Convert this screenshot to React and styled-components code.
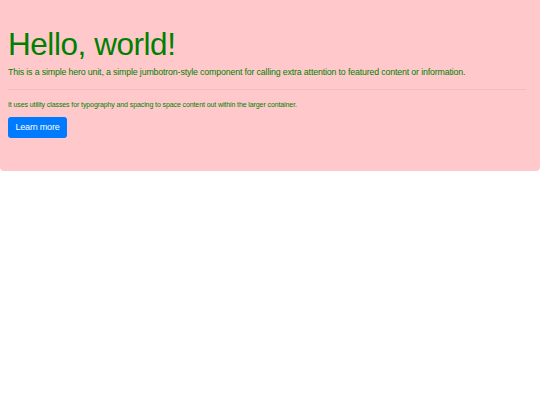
import React from "react";
import styled, { createGlobalStyle } from "styled-components";

const Global = createGlobalStyle`
  html, body { margin: 0; padding: 0; background: #fff; }
  body { font-family: "Liberation Sans", Arial, sans-serif; }
`;

const Jumbotron = styled.section`
  display: flex;
  flex-direction: column;
  align-items: flex-start;
  background: #ffc9cb;
  border-radius: 0 0 4px 4px;
  padding: 25.5px 14px 33px 8px;
  color: #008000;
`;

const Heading = styled.h1`
  margin: 0 0 3px;
  font-size: 31.5px;
  font-weight: 400;
  line-height: 1.2;
  letter-spacing: -0.45px;
`;

const Lead = styled.p`
  margin: 0;
  font-size: 8.8px;
  line-height: 1.5;
  letter-spacing: -0.15px;
`;

const Rule = styled.hr`
  align-self: stretch;
  margin: 10px 0 9.5px;
  border: 0;
  border-top: 1px solid rgba(0, 0, 0, 0.06);
`;

const Small = styled.p`
  margin: 0 0 7px;
  font-size: 7px;
  line-height: 1.5;
  letter-spacing: -0.1px;
`;

const Button = styled.a`
  display: block;
  background: #007bff;
  color: #fff;
  font-size: 9px;
  letter-spacing: -0.2px;
  line-height: 20.5px;
  padding: 0 7.5px;
  border-radius: 3px;
  text-decoration: none;
`;

export default function App() {
  return (
    <>
      <Global />
      <Jumbotron>
        <Heading>Hello, world!</Heading>
        <Lead>
          This is a simple hero unit, a simple jumbotron-style component for calling extra attention to featured content or information.
        </Lead>
        <Rule />
        <Small>It uses utility classes for typography and spacing to space content out within the larger container.</Small>
        <Button href="#">Learn more</Button>
      </Jumbotron>
    </>
  );
}
